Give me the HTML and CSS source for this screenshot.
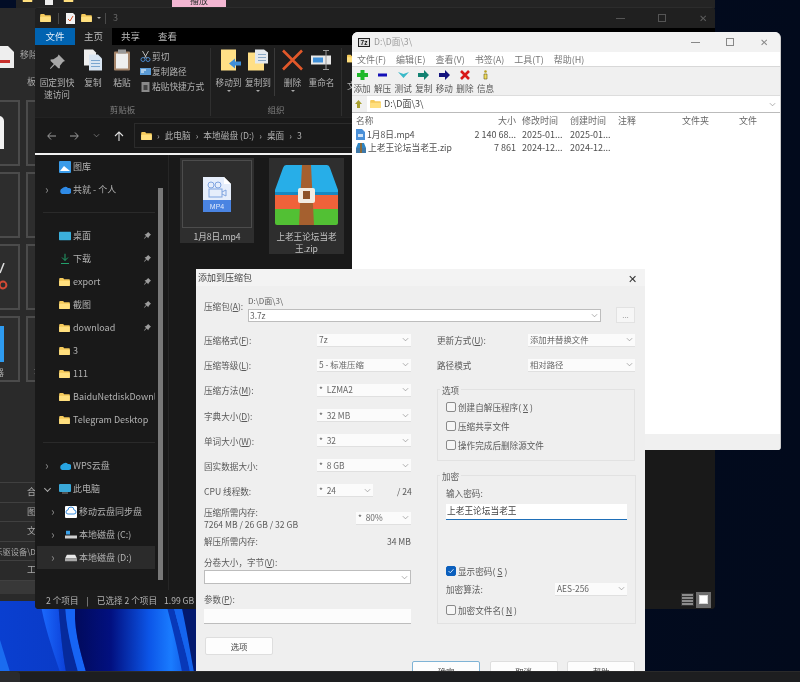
FILE: index.html
```html
<!DOCTYPE html>
<html lang="zh-CN">
<head>
<meta charset="utf-8">
<title>7-Zip</title>
<link rel="stylesheet" href="styles.css">
</head>
<body>
<svg class="defs" width="0" height="0" aria-hidden="true">
  <symbol id="folder" viewBox="0 0 16 12"><path d="M0 1.5Q0 0 1.5 0H6L7.5 2H15Q16 2 16 3V11Q16 12 15 12H1Q0 12 0 11Z" fill="#f4c95a"/><path d="M0 4H16V11Q16 12 15 12H1Q0 12 0 11Z" fill="#ffdf7e"/></symbol>
  <symbol id="pin" viewBox="0 0 10 10"><path d="M6 0L10 4 8.8 4.6 6.8 7 6.8 8.6 5.8 8.6 3.6 6.4 1 9 .6 8.6 3 6 1 4 1 3.2 2.8 3 5.4 1.2Z" fill="#a8a8a8"/></symbol>
  <symbol id="chev" viewBox="0 0 8 5"><path d="M1 1L4 4 7 1" fill="none" stroke="#8f8f8f" stroke-width=".8"/></symbol>
</svg>

<main class="desktop">
  <svg class="wallpaper" viewBox="0 0 200 72" width="200" height="72" preserveAspectRatio="none" aria-hidden="true">
    <defs>
      <linearGradient id="wp-l" x1="0" x2="1" y1="0" y2="0"><stop offset="0" stop-color="#0a3fd0"/><stop offset="1" stop-color="#0932b4"/></linearGradient>
      <linearGradient id="wp-r" x1="0" x2="1" y1="0" y2="0"><stop offset="0" stop-color="#010a5c"/><stop offset=".3" stop-color="#021080"/><stop offset=".62" stop-color="#0c56e8"/><stop offset=".8" stop-color="#1a7cff"/><stop offset="1" stop-color="#0c48d8"/></linearGradient>
      <linearGradient id="wp-s" x1="0" x2="1" y1="0" y2="0"><stop offset="0" stop-color="#1c6cff"/><stop offset="1" stop-color="#0c40d8"/></linearGradient>
    </defs>
    <rect width="200" height="72" fill="url(#wp-l)"/>
    <path d="M0 40C3 50 7 62 10 72H0Z" fill="#1a6cf0"/>
    <path d="M40 0H58C60 25 62 50 66 72H60C52 48 44 25 40 0Z" fill="url(#wp-s)"/>
    <path d="M58 0H66C65 25 72 50 78 72H66C62 50 60 25 58 0Z" fill="#062a9c"/>
    <path d="M65 0H76C72 25 80 50 86 72H78C72 50 65 25 65 0Z" fill="#1664f4"/>
    <path d="M76 0H195V72H86C80 50 72 25 76 0Z" fill="url(#wp-r)"/>
    <path d="M165 0H172C178 25 186 50 190 72H182C178 50 172 25 165 0Z" fill="#0838b8"/>
    <path d="M172 0H180C186 25 190 50 194 72H190C186 50 178 25 172 0Z" fill="#1464ee"/>
    <path d="M180 0H200V72H194C190 50 186 25 180 0Z" fill="#03196e"/>
  </svg>

  <section class="back-top">
    <svg class="bt-icon" width="11" height="7" aria-hidden="true"><use href="#folder"/></svg>
    <span class="bt-check"></span>
    <svg class="bt-icon" width="11" height="7" aria-hidden="true"><use href="#folder"/></svg>
    <span class="bt-tab">播放</span>
  </section>

  <section class="back-left">
    <div class="back-ribbon">
      <svg class="bl-doc" width="15" height="24" viewBox="0 0 15 24" aria-hidden="true"><path d="M0 1H8L14 7V23H0Z" fill="#eee"/><rect y="15" width="10" height="3" fill="#c8302c"/></svg>
      <span>移除</span>
      <small>板</small>
    </div>
    <div class="tiles">
      <div class="tile"><i class="t-white"></i></div><div class="tile"></div>
      <div class="tile"></div><div class="tile"></div>
      <div class="tile"><svg class="t-scissor" width="9" height="30" viewBox="0 0 9 30" aria-hidden="true"><path d="M4 0L0 10" stroke="#ddd" stroke-width="1.5"/><circle cx="3" cy="22" r="3.4" fill="none" stroke="#d24a35" stroke-width="2"/></svg></div><div class="tile"></div>
      <div class="tile"><i class="t-blue"></i><b>器</b></div><div class="tile"><b class="tb2">花</b></div>
    </div>
    <div class="back-list">
      <p>合</p><p>图</p><p>文</p><p class="long"><span>乐驱设备\D</span></p><p>工</p><p class="last"></p>
    </div>
  </section>

  <section class="explorer">
    <header class="ex-title">
      <svg width="11" height="8" aria-hidden="true"><use href="#folder"/></svg>
      <i class="bar"></i>
      <svg class="tt-doc" width="9" height="11" viewBox="0 0 9 11" aria-hidden="true"><path d="M0 0H7L9 2V11H0Z" fill="#f3f3f3"/><path d="M2 6L4 8 7 3" stroke="#d9542b" fill="none"/></svg>
      <svg width="11" height="8" aria-hidden="true"><use href="#folder"/></svg>
      <i class="mini-caret"></i>
      <i class="bar"></i>
      <span>3</span>
      <div class="win-ctl dark"><span class="c-min"></span><span class="c-max"></span><span class="c-x">✕</span></div>
    </header>
    <nav class="ex-tabs"><a class="active-file">文件</a><a class="active-home">主页</a><a>共享</a><a>查看</a></nav>
    <div class="ribbon">
      <div class="rgroup g1">
        <div class="rrow">
          <div class="big w-pin"><svg width="16" height="16" aria-hidden="true"><use href="#pin"/></svg><span>固定到快<br>速访问</span></div>
          <div class="big w-copy"><svg width="18" height="21" viewBox="0 0 18 21" aria-hidden="true"><path d="M0 0H9L12 3V16H0Z" fill="#eee"/><path d="M5 5H14L18 9V21H5Z" fill="#d9e5f2"/><path d="M7 11H16M7 14H16M7 17H16" stroke="#7ba6d0"/></svg><span>复制</span></div>
          <div class="big w-paste"><svg width="16" height="21" viewBox="0 0 16 21" aria-hidden="true"><rect y="2" width="16" height="19" rx="1" fill="#a4846a"/><rect x="2" y="4" width="12" height="15" fill="#efefef"/><rect x="4" y="0" width="8" height="4" fill="#999"/></svg><span>粘贴</span></div>
          <div class="smalls">
            <p><svg width="10" height="11" viewBox="0 0 10 11" aria-hidden="true"><path d="M2 0L6 7M8 0L4 7" stroke="#bbb"/><circle cx="2.5" cy="8.5" r="2" fill="none" stroke="#4a86c8"/><circle cx="7.5" cy="8.5" r="2" fill="none" stroke="#4a86c8"/></svg>剪切</p>
            <p><svg width="11" height="7" viewBox="0 0 11 7" aria-hidden="true"><rect width="11" height="7" fill="#5b9bd5"/><path d="M1 2H6M1 4H4" stroke="#fff"/></svg>复制路径</p>
            <p><svg width="8" height="10" viewBox="0 0 8 10" aria-hidden="true"><rect width="8" height="10" fill="#8a8a8a"/><rect x="2" y="3" width="4" height="5" fill="#444"/></svg>粘贴快捷方式</p>
          </div>
        </div>
        <small>剪贴板</small>
      </div>
      <div class="rgroup g2">
        <div class="rrow">
          <div class="big w-move"><svg width="24" height="21" viewBox="0 0 24 21" aria-hidden="true"><rect x="4" width="15" height="21" fill="#ffdf86"/><path d="M12 14L18 9V12H24V16H18V19Z" fill="#3f8fd8"/></svg><span>移动到</span><i class="rcaret"></i></div>
          <div class="big w-copyto"><svg width="20" height="21" viewBox="0 0 20 21" aria-hidden="true"><rect y="3" width="16" height="18" fill="#ffdf86"/><path d="M7 0H16L20 3V14H7Z" fill="#e4e9ee"/><path d="M10 5H18M10 8H18M10 11H18" stroke="#8aa9c6"/></svg><span>复制到</span><i class="rcaret"></i></div>
          <i class="rsep"></i>
          <div class="big w-del"><svg width="21" height="21" viewBox="0 0 21 21" aria-hidden="true"><path d="M1 1L20 20M20 1L1 20" stroke="#e2582a" stroke-width="2.6"/></svg><span>删除</span><i class="rcaret"></i></div>
          <div class="big w-ren"><svg width="21" height="21" viewBox="0 0 21 21" aria-hidden="true"><rect y="6" width="20" height="9" fill="#e8e8e8"/><rect x="2" y="8" width="10" height="5" fill="#3f8fd8"/><path d="M15 1V20M12 1H18M12 20H18" stroke="#999"/></svg><span>重命名</span></div>
        </div>
        <small>组织</small>
      </div>
      <div class="rgroup g3">
        <svg width="10" height="15" aria-hidden="true"><use href="#folder"/></svg><span>文</span>
      </div>
    </div>
    <div class="addr">
      <svg width="9" height="8" viewBox="0 0 9 8" aria-hidden="true"><path d="M4 .5L.7 4 4 7.5M1 4H9" fill="none" stroke="#a0a0a0"/></svg>
      <svg width="9" height="8" viewBox="0 0 9 8" aria-hidden="true"><path d="M5 .5L8.3 4 5 7.5M8 4H0" fill="none" stroke="#a0a0a0"/></svg>
      <svg width="7" height="5" aria-hidden="true"><use href="#chev"/></svg>
      <svg width="10" height="10" viewBox="0 0 10 10" aria-hidden="true"><path d="M1 5L5 1 9 5M5 1V10" fill="none" stroke="#ddd" stroke-width="1.1"/></svg>
      <div class="crumbs">
        <svg width="11" height="8" aria-hidden="true"><use href="#folder"/></svg>
        <b>›</b><span>此电脑</span><b>›</b><span>本地磁盘 (D:)</span><b>›</b><span>桌面</span><b>›</b><span>3</span>
      </div>
    </div>
    <div class="ex-body">
      <aside class="side">
        <ul class="tree">
          <li><svg class="ti" width="12" height="12" viewBox="0 0 12 12" aria-hidden="true"><rect width="12" height="12" rx="1" fill="#3a9be8"/><path d="M1 10L5 5 11 10Z" fill="#fff"/></svg>图库</li>
          <li class="arrow"><svg class="ti" width="12" height="8" viewBox="0 0 12 8" aria-hidden="true"><path d="M3 8A3 3 0 0 1 3 2.5 4 4 0 0 1 9 2 3 3 0 0 1 10 8Z" fill="#2e8ae6"/></svg>共就 - 个人</li>
          <li class="sep"></li>
          <li class="pinned"><svg class="ti" width="12" height="9" viewBox="0 0 12 9" aria-hidden="true"><rect width="12" height="9" rx="1" fill="#3bb0dc"/></svg>桌面</li>
          <li class="pinned"><svg class="ti" width="12" height="11" viewBox="0 0 12 11" aria-hidden="true"><path d="M6 0V7M3 4L6 7 9 4M2 10H10" fill="none" stroke="#22a06b"/></svg>下载</li>
          <li class="pinned"><svg class="ti" width="11" height="8" aria-hidden="true"><use href="#folder"/></svg>export</li>
          <li class="pinned"><svg class="ti" width="11" height="8" aria-hidden="true"><use href="#folder"/></svg>截图</li>
          <li class="pinned"><svg class="ti" width="11" height="8" aria-hidden="true"><use href="#folder"/></svg>download</li>
          <li><svg class="ti" width="11" height="8" aria-hidden="true"><use href="#folder"/></svg>3</li>
          <li><svg class="ti" width="11" height="8" aria-hidden="true"><use href="#folder"/></svg>111</li>
          <li><svg class="ti" width="11" height="8" aria-hidden="true"><use href="#folder"/></svg>BaiduNetdiskDownl</li>
          <li><svg class="ti" width="11" height="8" aria-hidden="true"><use href="#folder"/></svg>Telegram Desktop</li>
          <li class="sep"></li>
          <li class="arrow"><svg class="ti" width="12" height="8" viewBox="0 0 12 8" aria-hidden="true"><path d="M3 8A3 3 0 0 1 3 2.5 4 4 0 0 1 9 2 3 3 0 0 1 10 8Z" fill="#27a3e0"/></svg>WPS云盘</li>
          <li class="open"><svg class="ti" width="12" height="10" viewBox="0 0 12 10" aria-hidden="true"><rect width="12" height="8" rx="1" fill="#3aa8d8"/><rect x="3" y="8.5" width="6" height="1" fill="#888"/></svg>此电脑</li>
          <li class="arrow lvl2"><svg class="ti" width="12" height="12" viewBox="0 0 12 12" aria-hidden="true"><rect width="12" height="12" rx="1" fill="#fff"/><path d="M3 8A2 2 0 0 1 3 4 3 3 0 0 1 9 4 2 2 0 0 1 9 8Z" fill="none" stroke="#3a8fe0"/></svg>移动云盘同步盘</li>
          <li class="arrow lvl2"><svg class="ti" width="12" height="9" viewBox="0 0 12 9" aria-hidden="true"><rect y="5" width="12" height="3" fill="#cfcfcf"/><rect x="1" width="4" height="4" fill="#3aa0e8"/></svg>本地磁盘 (C:)</li>
          <li class="arrow lvl2 current"><svg class="ti" width="12" height="7" viewBox="0 0 12 7" aria-hidden="true"><path d="M2 0H10L12 4H0Z" fill="#e8e8e8"/><rect y="4" width="12" height="3" fill="#a8a8a8"/></svg>本地磁盘 (D:)</li>
        </ul>
        <i class="side-scroll"></i>
      </aside>
      <div class="files">
        <figure class="file f-mp4">
          <div class="f-thumb"><svg width="28" height="35" viewBox="0 0 28 35" aria-hidden="true"><path d="M0 0H21L28 7V35H0Z" fill="#e6eefb"/><path d="M21 0L28 7H21Z" fill="#fff"/><rect y="23" width="28" height="12" fill="#4a84e2"/><circle cx="8" cy="8" r="3" fill="none" stroke="#7fa4e0"/><circle cx="15" cy="8" r="3" fill="none" stroke="#7fa4e0"/><rect x="6" y="12" width="13" height="8" fill="none" stroke="#7fa4e0"/><path d="M19 15L23 13V19L19 17" fill="none" stroke="#7fa4e0"/><text x="14" y="32" class="mp4t">MP4</text></svg></div>
          <figcaption>1月8日.mp4</figcaption>
        </figure>
        <figure class="file f-zip">
          <div class="f-thumb"><svg width="63" height="60" viewBox="0 0 63 60" aria-hidden="true"><path d="M11 0H52Q54 0 55 3L63 25V30H0V25L8 3Q9 0 11 0Z" fill="#27aee8"/><path d="M0 27H63V30H0Z" fill="#1788c2"/><rect y="30" width="63" height="14" fill="#f0623a"/><path d="M0 44H63V58Q63 60 61 60H2Q0 60 0 58Z" fill="#52c034"/><path d="M27 0H36L39 60H24Z" fill="#a5602f"/><rect x="23" y="23" width="17" height="15" rx="2" fill="#f2ece2"/><rect x="28" y="26" width="7" height="8" fill="#8e5329"/></svg></div>
          <figcaption>上老王论坛当老王.zip</figcaption>
        </figure>
      </div>
    </div>
    <footer class="ex-status">
      <span>2 个项目</span><i>|</i><span>已选择 2 个项目</span><span>1.99 GB</span>
      <div class="views">
        <svg width="13" height="13" viewBox="0 0 13 13" aria-hidden="true"><rect width="13" height="13" fill="#333"/><path d="M1 2H12M1 5H12M1 8H12M1 11H12" stroke="#aaa" stroke-width="1.4"/></svg>
        <span class="view-on"><i></i></span>
      </div>
    </footer>
  </section>

  <section class="sevenzip">
    <header class="sz-title">
      <b class="sz-logo">7z</b><span>D:\D面\3\</span>
      <div class="win-ctl"><span class="c-min"></span><span class="c-max"></span><span class="c-x">✕</span></div>
    </header>
    <nav class="sz-menu"><a>文件(F)</a><a>编辑(E)</a><a>查看(V)</a><a>书签(A)</a><a>工具(T)</a><a>帮助(H)</a></nav>
    <div class="sz-tools">
      <div><svg width="11" height="10" viewBox="0 0 11 10" aria-hidden="true"><path d="M3.5 0H7.5V3H11V7H7.5V10H3.5V7H0V3H3.5Z" fill="#1eb82a"/></svg>添加</div>
      <div><svg width="9" height="10" viewBox="0 0 9 10" aria-hidden="true"><rect y="3.5" width="9" height="3" fill="#1410b8"/></svg>解压</div>
      <div><svg width="11" height="10" viewBox="0 0 11 10" aria-hidden="true"><path d="M0 2L5.5 8 11 2 5.5 4Z" fill="#39b9c8"/></svg>测试</div>
      <div><svg width="11" height="10" viewBox="0 0 11 10" aria-hidden="true"><path d="M0 3H6V0L11 5 6 10V7H0Z" fill="#128272"/></svg>复制</div>
      <div><svg width="11" height="10" viewBox="0 0 11 10" aria-hidden="true"><path d="M0 3H6V0L11 5 6 10V7H0Z" fill="#13137e"/></svg>移动</div>
      <div><svg width="10" height="10" viewBox="0 0 10 10" aria-hidden="true"><path d="M1 1L9 9M9 1L1 9" stroke="#d81818" stroke-width="2.6"/></svg>删除</div>
      <div><svg width="7" height="10" viewBox="0 0 7 10" aria-hidden="true"><circle cx="3.5" cy="1.5" r="1.3" fill="#b8a020"/><path d="M2 4H5V9H2Z" fill="#f0dc60" stroke="#6a5a10" stroke-width=".6"/></svg>信息</div>
    </div>
    <div class="sz-addr">
      <svg width="7" height="8" viewBox="0 0 7 8" aria-hidden="true"><path d="M3.5 0L7 4H5V8H2V4H0Z" fill="#a8a030"/></svg>
      <div class="sz-path"><svg width="11" height="8" aria-hidden="true"><use href="#folder"/></svg><span>D:\D面\3\</span><svg class="caret" width="7" height="5" aria-hidden="true"><use href="#chev"/></svg></div>
    </div>
    <div class="sz-list">
      <div class="sz-row sz-head"><span class="c1">名称</span><span class="c2">大小</span><span class="c3">修改时间</span><span class="c4">创建时间</span><span class="c5">注释</span><span class="c6">文件夹</span><span class="c7">文件</span></div>
      <div class="sz-row"><span class="c1"><svg width="9" height="11" viewBox="0 0 9 11" aria-hidden="true"><path d="M0 0H6L9 3V11H0Z" fill="#4a90d8"/><rect x="2" y="5" width="5" height="3" fill="#cfe2f6"/></svg>1月8日.mp4</span><span class="c2">2 140 68...</span><span class="c3">2025-01...</span><span class="c4">2025-01...</span></div>
      <div class="sz-row"><span class="c1"><svg width="10" height="10" viewBox="0 0 10 10" aria-hidden="true"><path d="M2 0H8L10 5H0Z" fill="#2f86c4"/><rect y="5" width="10" height="5" fill="#3f78a8"/><rect x="4" width="2" height="10" fill="#8a6a3a"/></svg>上老王论坛当老王.zip</span><span class="c2">7 861</span><span class="c3">2024-12...</span><span class="c4">2024-12...</span></div>
    </div>
    <footer class="sz-status"></footer>
  </section>

  <section class="dialog">
    <header class="dl-title"><span>添加到压缩包</span><b>✕</b></header>
    <div class="dl-archive">
      <label class="lab-arc">压缩包(<u>A</u>):</label>
      <div class="arc-main"><p>D:\D面\3\</p><div class="field sel arc-in">3.7z<svg width="7" height="5" aria-hidden="true"><use href="#chev"/></svg></div></div>
      <div class="dots">...</div>
    </div>
    <div class="dl-form">
      <div class="col-l">
        <div class="frow"><label>压缩格式(<u>F</u>):</label><div class="field sel s94">7z<svg width="7" height="5" aria-hidden="true"><use href="#chev"/></svg></div></div>
        <div class="frow"><label>压缩等级(<u>L</u>):</label><div class="field sel s94">5 - 标准压缩<svg width="7" height="5" aria-hidden="true"><use href="#chev"/></svg></div></div>
        <div class="frow"><label>压缩方法(<u>M</u>):</label><div class="field sel s94">*&nbsp; LZMA2<svg width="7" height="5" aria-hidden="true"><use href="#chev"/></svg></div></div>
        <div class="frow"><label>字典大小(<u>D</u>):</label><div class="field sel s94">*&nbsp; 32 MB<svg width="7" height="5" aria-hidden="true"><use href="#chev"/></svg></div></div>
        <div class="frow"><label>单词大小(<u>W</u>):</label><div class="field sel s94">*&nbsp; 32<svg width="7" height="5" aria-hidden="true"><use href="#chev"/></svg></div></div>
        <div class="frow"><label>固实数据大小:</label><div class="field sel s94">*&nbsp; 8 GB<svg width="7" height="5" aria-hidden="true"><use href="#chev"/></svg></div></div>
        <div class="frow f-cpu"><label>CPU 线程数:</label><div class="field sel s56">*&nbsp; 24<svg width="7" height="5" aria-hidden="true"><use href="#chev"/></svg></div><span class="end">/ 24</span></div>
        <div class="frow f-mem"><label>压缩所需内存:<br>7264 MB / 26 GB / 32 GB</label><div class="field sel s55">*&nbsp; 80%<svg width="7" height="5" aria-hidden="true"><use href="#chev"/></svg></div></div>
        <div class="frow f-dec"><label>解压所需内存:</label><span>34 MB</span></div>
        <label class="stack l-split">分卷大小，字节(<u>V</u>):</label>
        <div class="field sel wide"><svg width="7" height="5" aria-hidden="true"><use href="#chev"/></svg></div>
        <label class="stack l-param">参数(<u>P</u>):</label>
        <div class="field param"></div>
        <div class="btn b-opt">选项</div>
      </div>
      <div class="col-r">
        <div class="frow"><label>更新方式(<u>U</u>):</label><div class="field sel s107">添加并替换文件<svg width="7" height="5" aria-hidden="true"><use href="#chev"/></svg></div></div>
        <div class="frow"><label>路径模式</label><div class="field sel s107">相对路径<svg width="7" height="5" aria-hidden="true"><use href="#chev"/></svg></div></div>
        <fieldset class="fs fs-opt">
          <legend>选项</legend>
          <div class="chk"><i></i>创建自解压程序(<u>X</u>)</div>
          <div class="chk"><i></i>压缩共享文件</div>
          <div class="chk"><i></i>操作完成后删除源文件</div>
        </fieldset>
        <fieldset class="fs fs-enc">
          <legend>加密</legend>
          <label class="stack">输入密码:</label>
          <div class="field pass">上老王论坛当老王</div>
          <div class="chk show"><i class="on"><svg width="8" height="8" viewBox="0 0 8 8" aria-hidden="true"><path d="M1.5 4L3.3 5.8 6.5 2.2" fill="none" stroke="#cfe4fa"/></svg></i>显示密码(<u>S</u>)</div>
          <div class="frow f-alg"><label>加密算法:</label><div class="field sel s72">AES-256<svg width="7" height="5" aria-hidden="true"><use href="#chev"/></svg></div></div>
          <div class="chk enc-name"><i></i>加密文件名(<u>N</u>)</div>
        </fieldset>
      </div>
    </div>
    <div class="dl-foot"><div class="btn primary">确定</div><div class="btn">取消</div><div class="btn">帮助</div></div>
  </section>

  <footer class="taskbar"><i></i></footer>
</main>
</body>
</html>
```

FILE: styles.css
```css
* { box-sizing: border-box; }
html, body { margin: 0; height: 100%; background: #020c22; overflow: hidden; }
body { font-family: "Noto Sans CJK SC", "Noto Sans", sans-serif; font-size: 9px; line-height: 12px; }
p, ul, figure { margin: 0; padding: 0; }
li { list-style: none; }
i { font-style: normal; }
.defs { position: absolute; }
.desktop { position: relative; width: 800px; height: 682px; overflow: hidden; background: linear-gradient(90deg, #020d26, #020a1c); filter: blur(.45px); }

/* free-canvas layers */
.wallpaper { position: absolute; left: 0; top: 600px; }
.back-top { position: absolute; left: 16px; top: 0; width: 699px; height: 8px; background: #242424; display: flex; align-items: flex-start; gap: 10px; padding-left: 6px; overflow: hidden; }
.bt-icon { margin-top: -5px; }
.bt-check { width: 8px; height: 5px; background: #eee; margin-left: 2px; }
.bt-tab { margin-left: 88px; width: 54px; height: 7px; background: #f3b6d2; color: #333; text-align: center; line-height: 2px; }
.back-left { position: absolute; left: 0; top: 8px; width: 36px; height: 593px; background: #2a2a2a; color: #a8a8a8; overflow: hidden; }
.back-ribbon { height: 84px; padding-top: 36px; display: flex; position: relative; }
.back-ribbon span { margin: 5px 0 0 5px; white-space: nowrap; }
.back-ribbon small { position: absolute; right: 0; top: 68px; font-size: 9px; }
.bl-doc { flex: none; margin-top: 1px; }
.tiles { display: grid; grid-template-columns: 66px 66px; grid-auto-rows: 66px; gap: 6px; margin: 8px 0 0 -46px; width: 140px; }
.tile { border: 2px solid #4b4b4b; position: relative; overflow: hidden; background: #2d2d2d; }
.tile b { position: absolute; left: 39px; bottom: 1px; font-weight: 400; }
.tile .tb2 { left: 6px; }
.t-white { position: absolute; right: 14px; top: 14px; width: 5px; height: 33px; background: #f2f2f2; border-radius: 0 5px 0 0; }
.t-scissor { position: absolute; right: 9px; top: 17px; }
.t-blue { position: absolute; right: 14px; top: 8px; width: 5px; height: 36px; background: #2e9bf0; }
.back-list { margin-top: 100px; width: 36px; }
.back-list p { height: 19.5px; border-top: 1px solid #404040; text-align: right; white-space: nowrap; line-height: 18px; }
.back-list .long { position: relative; font-size: 8.2px; }
.back-list .long span { position: absolute; right: 0; }
.back-list .last { height: 14px; background: #383838; }
.taskbar { position: absolute; left: 0; right: 0; top: 671px; height: 11px; background: #1d1e20; z-index: 5; border-top: 1px solid #2a2a2a; }
.taskbar i { display: block; width: 20px; height: 10px; background: #2a2b2d; border-radius: 0 3px 0 0; }

/* explorer */
.explorer { position: absolute; left: 35px; top: 7px; width: 680px; height: 602px; background: #191919; color: #b2b2b2; border-radius: 4px; display: flex; flex-direction: column; overflow: hidden; border-top: 1px solid #2c2c2c; }
.ex-title { height: 20px; flex: none; background: #202020; display: flex; align-items: center; gap: 6px; padding-left: 5px; color: #666; position: relative; }
.ex-title .bar { width: 1px; height: 11px; background: #4a4a4a; margin: 0 1px; }
.mini-caret { width: 0; height: 0; border: 2px solid transparent; border-top-color: #aaa; margin: 2px -3px 0 -1px; }
.win-ctl { margin-left: auto; display: flex; align-items: center; color: #999; }
.win-ctl.dark { padding-right: 8px; gap: 33px; color: #5e5e5e; }
.win-ctl.dark .c-min { background: #555; }
.win-ctl.dark .c-max { border-color: #555; }
.c-min { width: 9px; height: 1px; background: #888; }
.c-max { width: 8px; height: 8px; border: 1px solid #888; }
.c-x { font-size: 10px; }
.ex-tabs { height: 17px; flex: none; background: #000; display: flex; font-size: 9.5px; line-height: 17px; color: #bcbcbc; }
.ex-tabs a { width: 37px; text-align: center; }
.ex-tabs .active-file { width: 40px; background: #0063b1; color: #e6f0fa; }
.ex-tabs .active-home { background: #1e1e1e; }
.ribbon { height: 72px; flex: none; background: #1e1e1e; display: flex; font-size: 8.7px; line-height: 12px; }
.rgroup { display: flex; flex-direction: column; border-right: 1px solid #2f2f2f; margin: 3px 0 1px; position: relative; }
.rgroup small { font-size: 8.5px; text-align: center; color: #7e7e7e; margin-top: auto; margin-bottom: 1px; }
.rrow { display: flex; height: 53px; }
.g1 { width: 176px; }
.g2 { width: 131px; }
.g3 { padding: 3px 0 0 5px; }
.g3 span { margin-top: 14px; }
.big { display: flex; flex-direction: column; align-items: center; text-align: center; position: relative; }
.big svg { height: 24px; flex: none; margin: 0 0 5px; }
.w-pin { width: 42px; margin-left: 1px; }
.w-pin svg { margin-top: 5px; height: 19px; }
.w-copy { width: 30px; }
.w-paste { width: 28px; }
.smalls { padding: 1px 0 0 4px; }
.smalls p { display: flex; align-items: center; gap: 1px; height: 15px; white-space: nowrap; }
.smalls svg { width: 11px; flex: none; }
.w-move { width: 31px; margin-left: 2px; white-space: nowrap; }
.w-copyto { width: 28px; white-space: nowrap; }
.w-del { width: 31px; margin-left: 2px; }
.w-ren { width: 27px; white-space: nowrap; }
.rsep { width: 1px; height: 48px; background: #3a3a3a; margin-left: 2px; }
.rcaret { position: absolute; top: 42px; left: 50%; margin-left: -2px; width: 0; height: 0; border: 2px solid transparent; border-top-color: #aaa; }
.addr { height: 38px; flex: none; background: #191919; display: flex; align-items: center; gap: 14px; padding-left: 12px; border-top: 1px solid #222; border-bottom: 2px solid #f2f2f2; }
.crumbs { flex: 1; height: 25px; border: 1px solid #2b2b2b; display: flex; align-items: center; gap: 5px; padding-left: 6px; margin-left: -4px; font-size: 8.7px; }
.crumbs b { font-weight: 400; color: #aaa; }
.ex-body { flex: 1; display: flex; min-height: 0; }
.side { width: 134px; flex: none; border-right: 1px solid #262626; position: relative; height: 435px; overflow: hidden; }
.tree { width: 120px; margin: 0; font-size: 9px; }
.tree li { height: 23px; line-height: 23px; padding-left: 38px; position: relative; white-space: nowrap; overflow: hidden; display: block; }
.tree .ti { position: absolute; left: 24px; top: 50%; transform: translateY(-50%); }
.tree .sep { height: 23px; }
.tree .sep::after { content: ""; position: absolute; left: 8px; right: -3px; top: 11px; height: 1px; background: #2a2a2a; }
.tree .lvl2 { padding-left: 44px; }
.tree .lvl2 .ti { left: 30px; }
.tree .arrow::before { content: "›"; position: absolute; left: 10px; top: -1px; color: #888; font-size: 12px; }
.tree .lvl2::before { left: 16px; }
.tree .open::before { content: ""; position: absolute; left: 10px; top: 9px; width: 4px; height: 4px; border: solid #aaa; border-width: 0 1px 1px 0; transform: rotate(45deg); }
.tree .current { background: #2b2b2b; margin-left: 2px; width: 118px; padding-left: 42px; }
.tree .current .ti { left: 28px; }
.tree .current::before { left: 14px; }
.tree .pinned::after { content: ""; position: absolute; right: 4px; top: 8px; width: 7px; height: 7px; background: #9c9c9c; clip-path: polygon(60% 0, 100% 40%, 85% 50%, 68% 72%, 60% 88%, 38% 64%, 8% 96%, 0 90%, 30% 58%, 8% 36%, 30% 30%, 50% 12%); }
.side-scroll { position: absolute; left: 123px; top: 33px; width: 5px; height: 392px; background: #787878; }
.files { flex: 1; display: flex; align-items: flex-start; gap: 15px; padding: 3px 0 0 11px; }
.file { width: 74px; background: #2e2e2e; text-align: center; color: #c4c4c4; font-size: 8.6px; line-height: 12px; }
.f-mp4 { height: 85px; }
.f-mp4 .f-thumb { margin: 2px 2px 0; height: 68px; border: 1px solid #4c4c4c; display: flex; align-items: center; justify-content: center; }
.f-zip { width: 75px; height: 96px; padding-top: 7px; }
.f-zip .f-thumb { height: 64px; display: flex; justify-content: center; }
.f-zip figcaption { margin-top: 1px; padding: 0 5px; }
.f-mp4 figcaption { margin-top: 2px; }
.mp4t { font: 7px "Liberation Sans", sans-serif; fill: #dfe9fb; text-anchor: middle; }
.ex-status { height: 19px; flex: none; background: #1b1b1b; display: flex; align-items: center; gap: 7px; padding-left: 11px; position: relative; font-size: 8.6px; white-space: nowrap; }
.ex-status i { margin: 0 1px; }
.views { margin-left: auto; margin-right: 4px; display: flex; align-items: center; gap: 2px; }
.view-on { width: 15px; height: 16px; background: #6e6e6e; display: flex; align-items: center; justify-content: center; }
.view-on i { width: 9px; height: 9px; background: #fff; border: 1px solid #d8d8d8; }

/* 7-zip */
.sevenzip { position: absolute; left: 352px; top: 32px; width: 429px; height: 418px; background: #fff; border-radius: 6px 6px 3px 3px; color: #666; display: flex; flex-direction: column; overflow: hidden; border-right: 1px solid #ccc; }
.sz-title { height: 20px; flex: none; background: #f2f2f2; display: flex; align-items: center; gap: 4px; padding-left: 6px; color: #999; font-size: 8.7px; }
.sz-logo { width: 12px; height: 9px; border: 1px solid #222; background: #ddd; color: #111; font: 700 6.5px/7px "Liberation Sans", sans-serif; text-align: center; }
.sevenzip .win-ctl { gap: 26px; padding-right: 12px; color: #888; }
.sevenzip .c-x { font-size: 10px; }
.sevenzip .c-max { background: #f2f2f2; }
.sz-menu { height: 14px; flex: none; background: #fff; display: flex; gap: 10px; padding: 1px 0 0 5px; line-height: 13px; font-size: 9px; color: #777; }
.sz-menu a { white-space: nowrap; }
.sz-tools { height: 30px; flex: none; background: #f0f0f0; border-top: 1px solid #d8d8d8; border-bottom: 1px solid #ddd; display: flex; gap: 2.6px; padding: 3px 0 0 1px; font-size: 8.6px; line-height: 10px; color: #555; }
.sz-tools div { width: 18px; display: flex; flex-direction: column; align-items: center; gap: 3px; white-space: nowrap; }
.sz-tools svg { flex: none; height: 10px; }
.sz-addr { height: 17px; flex: none; background: #f0f0f0; display: flex; align-items: center; gap: 5px; padding-left: 3px; border-bottom: 1px solid #bbb; }
.sz-path { flex: 1; background: #fff; height: 16px; display: flex; align-items: center; gap: 3px; padding-left: 3px; color: #444; font-size: 9px; }
.sz-path .caret { margin-left: auto; margin-right: 4px; }
.sz-list { flex: 1; font-size: 9px; color: #4f4f4f; }
.sz-row { display: grid; grid-template-columns: 114px 46px 48px 48px 64px 57px 40px; height: 13px; line-height: 13px; padding-left: 4px; white-space: nowrap; }
.sz-head { height: 15px; line-height: 15px; color: #666; }
.sz-row .c1 { display: flex; align-items: center; gap: 2px; font-size: 8.7px; }
.sz-row .c2 { text-align: right; }
.sz-row .c3, .sz-row .c4, .sz-row .c5, .sz-row .c6, .sz-row .c7 { padding-left: 6px; }
.sz-status { height: 16px; flex: none; background: #f0f0f0; }

/* dialog */
.dialog { position: absolute; left: 196px; top: 269px; width: 449px; height: 420px; background: #efefef; border-radius: 6px 6px 0 0; color: #5a5a5a; font-size: 8.6px; line-height: 12px; padding: 0 10px 0 8px; z-index: 3; }
.dl-title { height: 17px; margin: 0 -10px 0 -8px; padding: 0 8px 0 2px; background: #f3f3f3; display: flex; justify-content: space-between; align-items: center; color: #444; font-size: 9px; }
.dl-title b { font-weight: 400; font-size: 11px; color: #333; }
.dl-archive { display: flex; padding-top: 9px; }
.lab-arc { width: 44px; flex: none; margin-top: 5px; }
.arc-main { width: 353px; }
.arc-main p { height: 14px; line-height: 12px; font-size: 8px; }
.arc-in { width: 353px; height: 12px; }
.dots { width: 19px; height: 16px; margin: 12px 0 0 15px; background: #f6f6f6; border: 1px solid #e2e2e2; text-align: center; color: #999; font-size: 8px; line-height: 13px; }
.field { background: #fbfbfb; color: #666; }
.sel { display: flex; align-items: center; justify-content: space-between; height: 13px; padding: 0 2px; font-size: 8.4px; line-height: 13px; white-space: nowrap; border-bottom: 1px solid #e0e0e0; }
.arc-in { border: 1px solid #bdbdbd; background: #fff; padding-left: 1px; }
.dl-form { display: grid; grid-template-columns: 207px 198px; column-gap: 26px; padding-top: 10.5px; }
.frow { display: flex; align-items: center; justify-content: space-between; height: 13px; margin-bottom: 12.2px; white-space: nowrap; }
.s94 { width: 94px; }
.s56 { width: 56px; margin-left: auto; }
.s55 { width: 55px; }
.s107 { width: 107px; }
.s72 { width: 72px; }
.f-cpu { margin-top: -.5px; margin-bottom: 9px; }
.f-cpu .end { width: 14px; margin-left: 24px; text-align: right; }
.f-mem { height: 24px; margin-bottom: 4px; }
.f-mem label { line-height: 12px; }
.f-dec { margin-bottom: 9px; }
.stack { display: block; }
.wide { width: 207px; height: 14px; border: 1px solid #bdbdbd; background: #fff; margin-top: 2px; justify-content: flex-end; }
.l-split { height: 12px; }
.l-param { margin-top: 9px; }
.param { width: 207px; height: 15px; margin-top: 4px; background: #fcfcfc; border-bottom: 1px solid #bdbdbd; }
.btn { width: 68px; height: 22px; background: #fdfdfd; border: 1px solid #dedede; border-radius: 2px; text-align: center; font-size: 8.4px; line-height: 18px; color: #444; }
.b-opt { height: 18px; line-height: 16px; margin-top: 13px; margin-left: 1px; }
.fs { margin: 9px 0 0; padding: 0; border: 1px solid #e2e2e2; }
.fs legend { padding: 0 2px; margin-left: -6px; height: 12px; line-height: 12px; }
.fs-opt { padding: 5px 8px 9px; height: 77px; margin-top: 5.5px; }
.fs-enc { padding: 5px 8px 7px; height: 154px; }
.chk { display: flex; align-items: center; gap: 2px; height: 12px; white-space: nowrap; }
.chk + .chk { margin-top: 7px; }
.chk i { width: 10px; height: 10px; border: 1px solid #8a8a8a; border-radius: 2px; background: #f6f6f6; flex: none; display: flex; align-items: center; justify-content: center; }
.chk i.on { background: #0b5fbd; border-color: #0b5fbd; }
.pass { width: 181px; height: 16px; margin-top: 5px; background: #fff; border-bottom: 1px solid #1f6fb8; padding-left: 1px; line-height: 14px; font-size: 8.7px; color: #444; }
.show { margin-top: 45px; }
.f-alg { margin: 6px 0 8px; }
.enc-name { margin-top: 0; }
.dl-foot { display: flex; justify-content: flex-end; gap: 9.5px; margin-top: 6px; }
.btn.primary { border: 1px solid #7fb3d5; }
```
